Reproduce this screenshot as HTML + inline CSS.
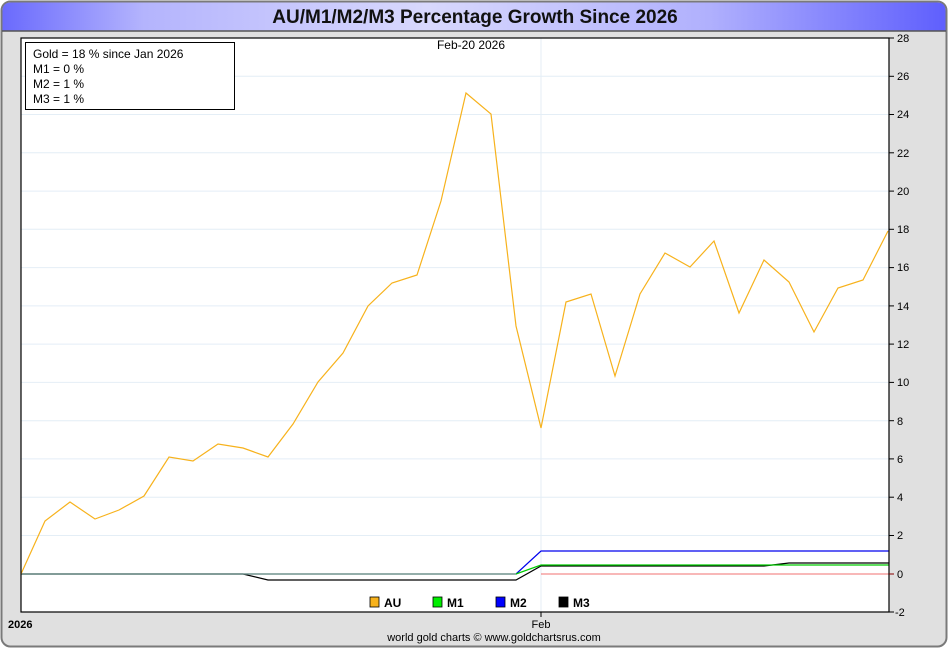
<!DOCTYPE html>
<html><head><meta charset="utf-8"><style>
html,body{margin:0;padding:0;background:#fff;width:950px;height:650px;overflow:hidden}
svg{display:block}
text{font-family:"Liberation Sans",sans-serif}
</style></head><body>
<svg width="950" height="650" viewBox="0 0 950 650" xmlns="http://www.w3.org/2000/svg">
<defs>
<linearGradient id="tg" x1="0" x2="1" y1="0" y2="0">
<stop offset="0" stop-color="#6a6afd"/>
<stop offset="0.15" stop-color="#b4b4fd"/>
<stop offset="0.45" stop-color="#d8d8fd"/>
<stop offset="0.75" stop-color="#b0b0fd"/>
<stop offset="1" stop-color="#5f5ffd"/>
</linearGradient>
</defs>
<rect x="1.5" y="1.5" width="945" height="645" rx="9" fill="#e0e0e0" stroke="#7a7a7a" stroke-width="2"/>
<path d="M2.5 31 V11 Q2.5 2.5 11 2.5 H937 Q945.5 2.5 945.5 11 V31 Z" fill="url(#tg)"/>
<line x1="2" y1="31" x2="946" y2="31" stroke="#555" stroke-width="1.5"/>
<text x="475" y="23" text-anchor="middle" font-size="19" font-weight="bold" fill="#111">AU/M1/M2/M3 Percentage Growth Since 2026</text>
<rect x="21" y="38" width="868" height="574" fill="#fff"/>
<g stroke="#e4eef6" stroke-width="1">
<line x1="21" y1="76.3" x2="889" y2="76.3"/><line x1="21" y1="114.5" x2="889" y2="114.5"/><line x1="21" y1="152.8" x2="889" y2="152.8"/><line x1="21" y1="191.1" x2="889" y2="191.1"/><line x1="21" y1="229.3" x2="889" y2="229.3"/><line x1="21" y1="267.6" x2="889" y2="267.6"/><line x1="21" y1="305.9" x2="889" y2="305.9"/><line x1="21" y1="344.1" x2="889" y2="344.1"/><line x1="21" y1="382.4" x2="889" y2="382.4"/><line x1="21" y1="420.7" x2="889" y2="420.7"/><line x1="21" y1="458.9" x2="889" y2="458.9"/><line x1="21" y1="497.2" x2="889" y2="497.2"/><line x1="21" y1="535.5" x2="889" y2="535.5"/>
<line x1="541" y1="38" x2="541" y2="612"/>
</g>
<line x1="541" y1="574" x2="889" y2="574" stroke="#f07070" stroke-width="1"/>
<polyline fill="none" stroke="#000" stroke-width="1.2" points="21,574 243,574 268,580 516,580 541,566 764,566 789,563 889,563"/>
<polyline fill="none" stroke="#0000ee" stroke-width="1.2" points="21,574 516,574 541,551 889,551"/>
<polyline fill="none" stroke="#00cc00" stroke-width="1.2" points="21,574 516,574 541,565 889,565"/>
<polyline fill="none" stroke="#999" stroke-width="1" points="21,574 516,574"/>
<polyline fill="none" stroke="#f7b21c" stroke-width="1.2" points="21,574 45,521 70,502 95,519 119,510 144,496 169,457 193,461 218,444 243,448 268,457 293,424 318,382 343,353 368,306 392,283 417,275 441,201 466,93 491,114 516,326 541,428 566,302 591,294 615,376 640,294 665,253 690,267 714,241 739,313 764,260 789,282 814,332 838,288 863,280 888,231"/>
<rect x="21" y="38" width="868" height="574" fill="none" stroke="#000" stroke-width="1.2"/>
<g stroke="#000" stroke-width="1">
<line x1="889" y1="38" x2="894" y2="38"/><line x1="889" y1="76.3" x2="894" y2="76.3"/><line x1="889" y1="114.5" x2="894" y2="114.5"/><line x1="889" y1="152.8" x2="894" y2="152.8"/><line x1="889" y1="191.1" x2="894" y2="191.1"/><line x1="889" y1="229.3" x2="894" y2="229.3"/><line x1="889" y1="267.6" x2="894" y2="267.6"/><line x1="889" y1="305.9" x2="894" y2="305.9"/><line x1="889" y1="344.1" x2="894" y2="344.1"/><line x1="889" y1="382.4" x2="894" y2="382.4"/><line x1="889" y1="420.7" x2="894" y2="420.7"/><line x1="889" y1="458.9" x2="894" y2="458.9"/><line x1="889" y1="497.2" x2="894" y2="497.2"/><line x1="889" y1="535.5" x2="894" y2="535.5"/><line x1="889" y1="612" x2="894" y2="612"/>
<line x1="541" y1="612" x2="541" y2="617"/>
</g>
<line x1="889" y1="574" x2="894" y2="574" stroke="#800" stroke-width="1"/>
<g font-size="11" fill="#000">
<text x="897" y="42">28</text><text x="897" y="80">26</text><text x="897" y="118">24</text><text x="897" y="157">22</text><text x="897" y="195">20</text><text x="897" y="233">18</text><text x="897" y="271">16</text><text x="897" y="310">14</text><text x="897" y="348">12</text><text x="897" y="386">10</text><text x="897" y="425">8</text><text x="897" y="463">6</text><text x="897" y="501">4</text><text x="897" y="539">2</text><text x="897" y="578">0</text><text x="895" y="616">-2</text>
</g>
<text x="471" y="49" text-anchor="middle" font-size="12">Feb-20  2026</text>
<rect x="25.5" y="42.5" width="209" height="67" fill="#fff" stroke="#000" stroke-width="1"/>
<g font-size="12" fill="#000">
<text x="33" y="58">Gold = 18 % since Jan 2026</text>
<text x="33" y="73">M1 = 0 %</text>
<text x="33" y="88">M2 = 1 %</text>
<text x="33" y="103">M3 = 1 %</text>
</g>
<g font-size="12" font-weight="bold">
<rect x="370" y="597" width="9" height="10" fill="#f7b21c" stroke="#000" stroke-width="0.8"/><text x="384" y="607">AU</text>
<rect x="433" y="597" width="9" height="10" fill="#00ee00" stroke="#000" stroke-width="0.8"/><text x="447" y="607">M1</text>
<rect x="496" y="597" width="9" height="10" fill="#0000ff" stroke="#000" stroke-width="0.8"/><text x="510" y="607">M2</text>
<rect x="559" y="597" width="9" height="10" fill="#000" stroke="#000" stroke-width="0.8"/><text x="573" y="607">M3</text>
</g>
<text x="8" y="628" font-size="11" font-weight="bold">2026</text>
<text x="541" y="628" font-size="11" text-anchor="middle">Feb</text>
<text x="494" y="641" font-size="11" text-anchor="middle">world gold charts © www.goldchartsrus.com</text>
</svg>
</body></html>
